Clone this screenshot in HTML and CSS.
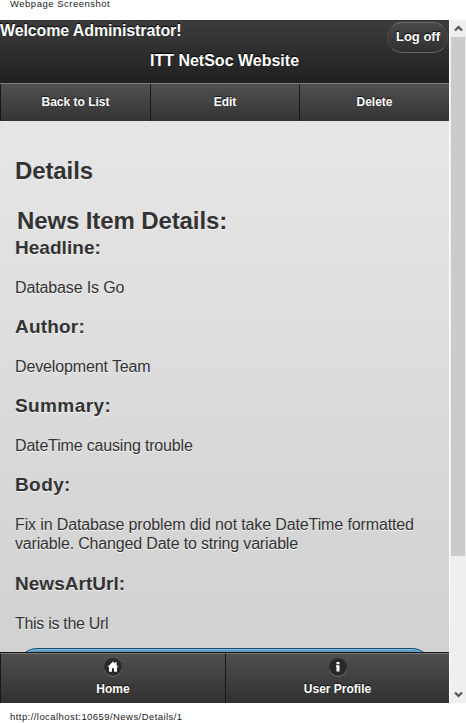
FILE: index.html
```html
<!DOCTYPE html>
<html lang="en">
<head>
<meta charset="utf-8">
<title>ITT NetSoc Website</title>
<link rel="stylesheet" href="styles.css">
</head>
<body>
<div class="caption">Webpage Screenshot</div>
<div class="window">
  <div class="page">
    <header class="header">
      <div class="welcome">Welcome Administrator!</div>
      <h1>ITT NetSoc Website</h1>
      <a class="logoff"><span>Log off</span></a>
    </header>
    <nav class="navbar">
      <a>Back to List</a><a>Edit</a><a>Delete</a>
    </nav>
    <main class="content">
      <h2 class="details">Details</h2>
      <h2 class="news">News Item Details:</h2>
      <h3>Headline:</h3>
      <p>Database Is Go</p>
      <h3 class="wide">Author:</h3>
      <p>Development Team</p>
      <h3 class="wider">Summary:</h3>
      <p class="tight">DateTime causing trouble</p>
      <h3 class="wider">Body:</h3>
      <p>Fix in Database problem did not take DateTime formatted<br><span class="tight">variable. Changed Date to string variable</span></p>
      <h3>NewsArtUrl:</h3>
      <p class="tightest">This is the Url</p>
      <div class="button"></div>
    </main>
    <footer class="footer">
      <a>
        <svg width="20" height="20" viewBox="0 0 20 20"><circle cx="10" cy="10.7" r="9" fill="#858585"/><circle cx="10" cy="10" r="9" fill="#292929"/><path d="M10 4.6 4.6 10H6v4.8h3v-3.500h2v3.500h3V10h1.400L13.600 8.200V5.200h-1.600v1.400z" fill="#fff"/></svg>
        <span>Home</span>
      </a>
      <a>
        <svg width="20" height="20" viewBox="0 0 20 20"><circle cx="10" cy="10.700" r="9" fill="#858585"/><circle cx="10" cy="10" r="9" fill="#292929"/><path d="M8.500 5h3v2.300h-3zM8 8.300h3.500v6.200h-3v-4.500H8z" fill="#fff"/></svg>
        <span>User Profile</span>
      </a>
    </footer>
  </div>
  <div class="scrollbar">
    <div class="arrow"><svg width="9" height="7" viewBox="0 0 9 7"><path d="M1 5.500 4.500 2 8 5.500" fill="none" stroke="#555" stroke-width="2.200"/></svg></div>
    <div class="thumb"></div>
    <div class="track"></div>
    <div class="arrow"><svg width="9" height="7" viewBox="0 0 9 7"><path d="M1 1.500 4.500 5 8 1.500" fill="none" stroke="#555" stroke-width="2.200"/></svg></div>
  </div>
</div>
<div class="url">http://localhost:10659/News/Details/1</div>
</body>
</html>
```
FILE: styles.css
```css
* { box-sizing: border-box; }
body {
  margin: 0;
  height: 723px;
  overflow: hidden;
  background: #fff;
  color: #333;
  font-family: "Liberation Sans", Arial, sans-serif;
}
h1, h2, h3, p { margin: 0; }
.caption, .url {
  height: 20px;
  padding-left: 10px;
  font-size: 9.5px;
  color: #222;
  white-space: nowrap;
}
.caption { line-height: 8px; letter-spacing: .5px; }
.url { padding-top: 8px; line-height: 11px; letter-spacing: .44px; }
.window { display: flex; height: 683px; }
.page {
  display: flex;
  flex-direction: column;
  width: 449px;
  height: 683px;
  overflow: hidden;
}
.header {
  position: relative;
  flex: none;
  height: 63px;
  background: linear-gradient(#3c3c3c, #202020);
  border-top: 1px solid #333;
  color: #fff;
  font-weight: bold;
  text-shadow: 0 -1px 1px #000;
}
.welcome { font-size: 16px; line-height: 20px; letter-spacing: -.12px; white-space: nowrap; }
.header h1 { margin-top: 10px; font-size: 16px; line-height: 20px; text-align: center; }
.logoff {
  position: absolute;
  top: 1px;
  right: 1px;
  width: 61px;
  height: 31px;
  border: 1px solid #686868;
  border-left-color: #484848;
  border-right-color: #484848;
  border-radius: 15px;
  background: linear-gradient(#484848, #303030);
  font-size: 13px;
  line-height: 28px;
  text-align: center;
}
.logoff span { margin-left: 1px; }
.navbar {
  display: grid;
  grid-template-columns: 151px 149px 149px;
  flex: none;
  height: 38px;
  background: linear-gradient(#505050, #343434);
  border-top: 1px solid #808080;
}
.navbar a {
  border-right: 1px solid #181818;
  color: #fff;
  font-size: 12px;
  font-weight: bold;
  line-height: 36px;
  text-align: center;
  text-shadow: 0 -1px 1px #111;
}
.navbar a:first-child { border-left: 1px solid #181818; }
.navbar a:last-child { border-right: 0; }
.content {
  flex: 1;
  min-height: 0;
  overflow: hidden;
  padding: 36px 15px 0;
  background: linear-gradient(#e6e6e6, #d1d1d1);
  text-shadow: 0 1px 0 #f3f3f3;
  white-space: nowrap;
}
.content h2 { font-size: 24px; line-height: 28px; letter-spacing: -.11px; }
.content .news { margin: 22px 0 1.500px 2px; }
.content h3 { font-size: 19px; line-height: 22px; letter-spacing: .04px; }
.content p { margin: 19px 0 19.300px; font-size: 16px; line-height: 19px; letter-spacing: -.127px; }
.content .wide { letter-spacing: .2px; }
.content .wider { letter-spacing: .4px; }
.content .tight { letter-spacing: -.17px; }
.content .tightest { letter-spacing: -.3px; }
.button {
  height: 40px;
  margin: -3.500px 2px 0;
  border: 1px solid #145072;
  border-radius: 20px;
  background: #5f9cc5;
  box-shadow: inset 0 1px 0 #85bae0;
}
.footer {
  display: grid;
  grid-template-columns: 226px 223px;
  flex: none;
  height: 51px;
  border-top: 1px solid #181818;
  background: linear-gradient(#505050, #303030);
}
.footer a {
  display: flex;
  flex-direction: column;
  align-items: center;
  padding-top: 3px;
  border-top: 1px solid #777;
  color: #fff;
  font-size: 12px;
  font-weight: bold;
  line-height: 16px;
  text-shadow: 0 -1px 1px #111;
}
.footer a:first-child { border-right: 1px solid #181818; border-left: 1px solid #181818; }
.footer span { margin-top: 4px; }
.scrollbar {
  display: flex;
  flex-direction: column;
  width: 17px;
  padding-left: 1px;
  background: #efefef;
  border-left: 1px solid #fff;
}
.arrow {
  display: flex;
  align-items: center;
  justify-content: center;
  height: 17px;
}
.thumb { height: 519px; margin-right: 1px; background: #cbcbcb; }
.track { flex: 1; }
```
